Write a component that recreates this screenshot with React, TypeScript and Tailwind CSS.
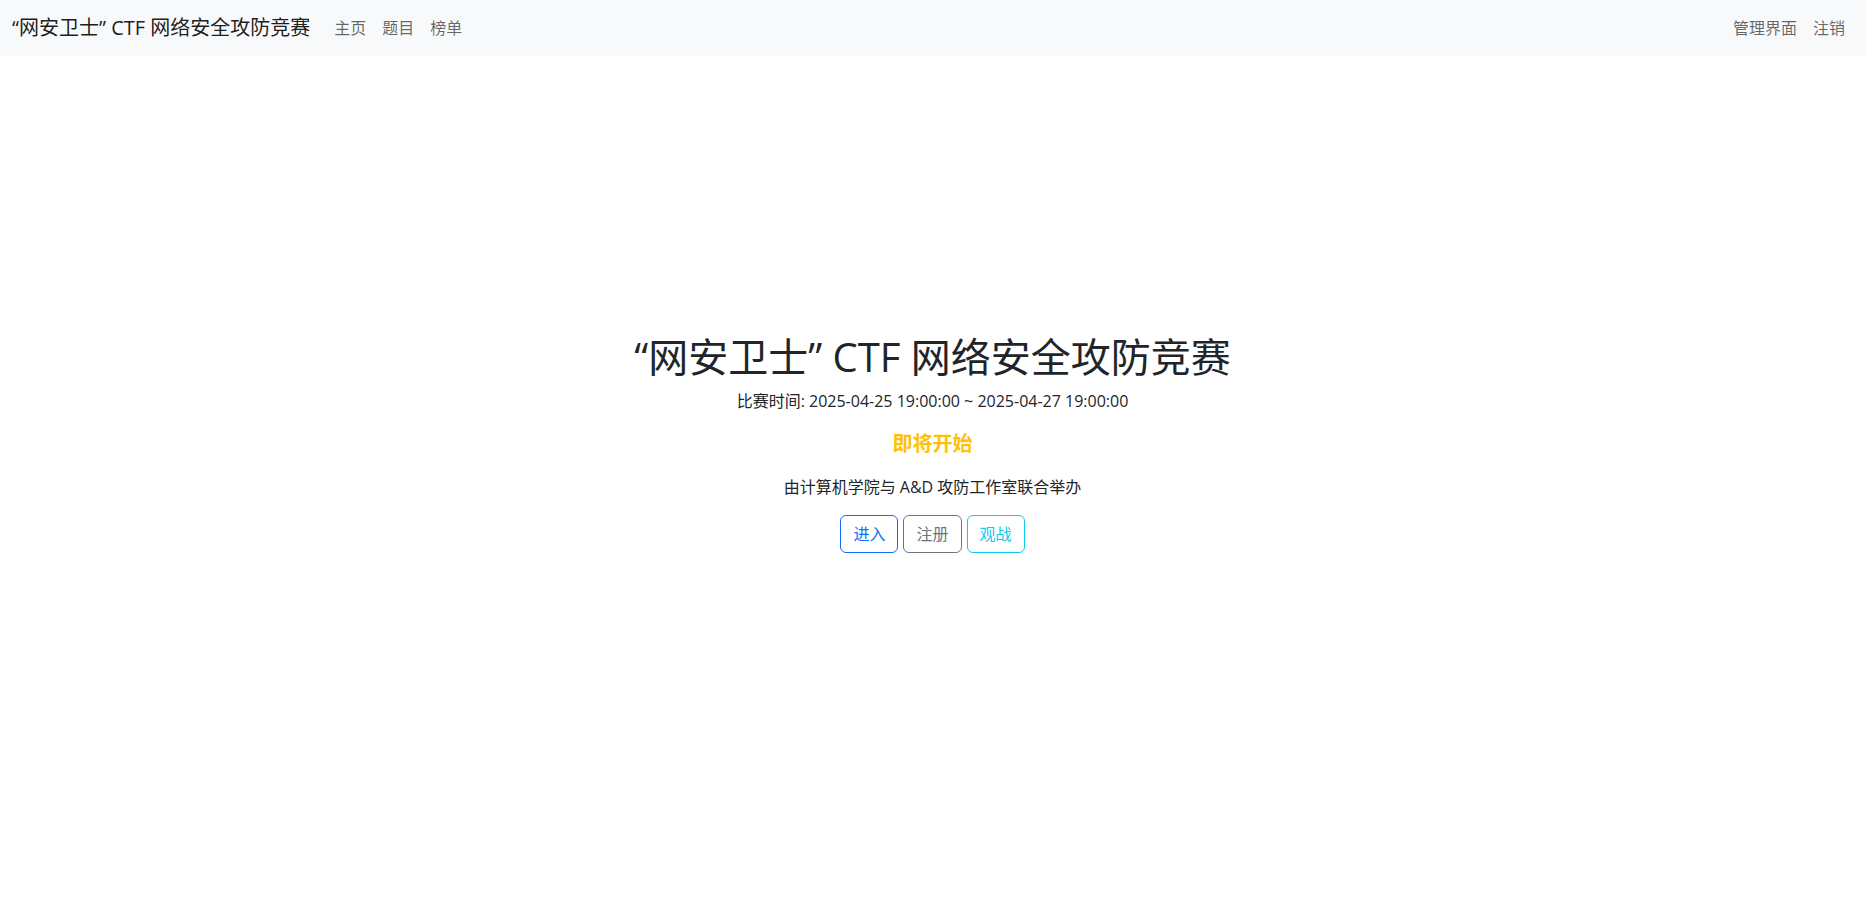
const NAV_LINKS = ['主页', '题目', '榜单']

const BUTTONS = [
  { label: '进入', cls: 'border-[#0d6efd] text-[#0d6efd]' },
  { label: '注册', cls: 'border-[#6c757d] text-[#6c757d]' },
  { label: '观战', cls: 'border-[#0dcaf0] text-[#0dcaf0]' },
]

export default function App() {
  return (
    <div
      className="min-h-screen bg-white text-[#212529]"
      style={{ fontFamily: '"Open Sans", "Noto Sans CJK SC", sans-serif' }}
    >
      <nav className="flex h-14 items-center justify-between bg-[#f8f9fa] px-3">
        <div className="flex items-center">
          <a className="mr-4 text-[20px] leading-[30px] text-black/90">
            “网安卫士” CTF 网络安全攻防竞赛
          </a>
          <ul className="flex">
            {NAV_LINKS.map((l) => (
              <li key={l}>
                <a className="block px-2 py-2 text-base leading-6 text-black/60">{l}</a>
              </li>
            ))}
          </ul>
        </div>
        <ul className="flex">
          {['管理界面', '注销'].map((l) => (
            <li key={l}>
              <a className="block px-2 py-2 text-base leading-6 text-black/60">{l}</a>
            </li>
          ))}
        </ul>
      </nav>

      <main className="flex flex-col items-center pt-[277px] text-center">
        <h1 className="mb-2 text-[40px] font-normal leading-[1.2]">
          “网安卫士” CTF 网络安全攻防竞赛
        </h1>
        <p className="text-base leading-6">
          比赛时间: 2025-04-25 19:00:00 ~ 2025-04-27 19:00:00
        </p>
        <h5 className="mt-[19px] text-[20px] font-bold leading-[1.2] text-[#ffc107]">即将开始</h5>
        <p className="mt-[19px] text-base leading-6">由计算机学院与 A&amp;D 攻防工作室联合举办</p>
        <div className="mt-4 flex gap-[5px]">
          {BUTTONS.map((b) => (
            <button
              key={b.label}
              type="button"
              className={`rounded-md border bg-transparent px-3 py-1.5 text-base leading-6 ${b.cls}`}
            >
              {b.label}
            </button>
          ))}
        </div>
      </main>
    </div>
  )
}
